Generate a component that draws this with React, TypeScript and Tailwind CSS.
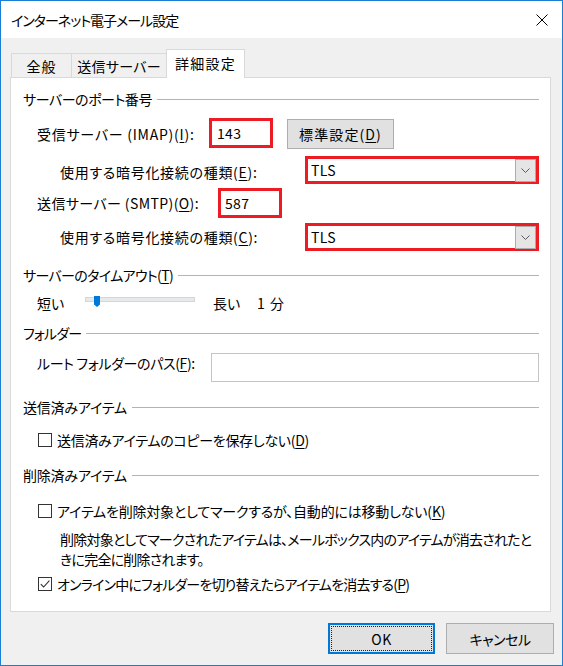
import React from "react";

function U({ children }: { children: React.ReactNode }) {
  return <span className="underline underline-offset-[2px] decoration-[1px]">{children}</span>;
}

function Header({ children, className = "", textClass = "" }: { children: React.ReactNode; className?: string; textClass?: string }) {
  return (
    <div className={"flex items-center h-[20px] " + className}>
      <span className={"whitespace-nowrap " + textClass}>{children}</span>
      <div className="ml-[5px] flex-1 h-px bg-[#b4b4b4]" />
    </div>
  );
}

function Check({ checked = false }: { checked?: boolean }) {
  return (
    <div className="w-[14px] h-[14px] border border-[#333333] bg-white flex items-center justify-center shrink-0">
      {checked && (
        <svg width="12" height="12" viewBox="0 0 12 12">
          <path d="M1.8 6.2 L4.6 9 L10.4 2.6" stroke="#333333" strokeWidth="1.1" fill="none" />
        </svg>
      )}
    </div>
  );
}

function Combo() {
  return (
    <div className="w-[234px] h-[28px] border-[3px] border-[#ed1c24] bg-white flex items-center justify-between shrink-0">
      <span className="pl-[3px] tracking-[0.3px]">TLS</span>
      <div className="w-[21px] h-[23px] border border-[#acacac] bg-[#e5e5e5] flex items-center justify-center">
        <svg width="9" height="5" viewBox="0 0 9 5">
          <path d="M0.5 0.5 L4.5 4.5 L8.5 0.5" stroke="#5a5a5a" strokeWidth="1" fill="none" />
        </svg>
      </div>
    </div>
  );
}

export default function App() {
  return (
    <div className="w-[563px] h-[666px] border border-[#1a7ed6] bg-[#f0f0f0] flex flex-col text-[14px] text-black font-['Noto_Sans_CJK_JP',sans-serif] [font-feature-settings:'palt'] leading-[20px] overflow-hidden">
      {/* title bar */}
      <div className="h-[37px] bg-white flex items-center justify-between pl-[10px] pr-[14px] shrink-0">
        <span className="tracking-[-1px]">インターネット電子メール設定</span>
        <svg width="12" height="12" viewBox="0 0 12 12">
          <path d="M0.5 0.5 L11.5 11.5 M11.5 0.5 L0.5 11.5" stroke="#000" strokeWidth="1" fill="none" />
        </svg>
      </div>

      {/* body */}
      <div className="flex-1 flex flex-col pt-[11px]">
        {/* tabs */}
        <div className="flex items-end h-[28px] ml-[10px]">
          <div className="w-[60px] h-[24px] border-l border-t border-[#d9d9d9] flex items-center justify-center tracking-[1px]">全般</div>
          <div className="w-[95px] h-[24px] border-l border-t border-[#d9d9d9] flex items-center justify-center tracking-[0.3px]">送信サーバー</div>
          <div className="relative z-10 -mb-px w-[79px] h-[29px] border-l border-t border-r border-[#d9d9d9] bg-white flex items-center justify-center pb-[2px] tracking-[1.2px]">
            詳細設定
          </div>
        </div>

        {/* panel */}
        <div className="ml-[9px] w-[541px] h-[535px] border border-[#d9d9d9] bg-white pl-[12px] pr-[11px] flex flex-col">
          <Header className="mt-[11px]" textClass="tracking-[-0.45px]">サーバーのポート番号</Header>

          <div className="flex items-start mt-[9px] h-[32px]">
            <div className="ml-[14px] w-[172px] h-[32px] flex items-center whitespace-nowrap tracking-[0.75px]">
              受信サーバー (IMAP)(<U>I</U>):
            </div>
            <div className="w-[64px] h-[30px] border-[3px] border-[#ed1c24] bg-white flex items-center pl-[5px] shrink-0 tracking-[0.3px]">143</div>
            <button className="ml-[14px] mt-px w-[107px] h-[30px] border border-[#adadad] bg-[#e1e1e1] flex items-center justify-center shrink-0 tracking-[1.1px]">
              標準設定(<U>D</U>)
            </button>
          </div>

          <div className="flex items-center mt-[6px] h-[28px]">
            <div className="ml-[37px] w-[246px] pt-[3px] whitespace-nowrap tracking-[0.7px]">
              使用する暗号化接続の種類(<U>E</U>):
            </div>
            <Combo />
          </div>

          <div className="flex items-center mt-[4px] h-[30px]">
            <div className="ml-[14px] w-[181px] whitespace-nowrap tracking-[0.4px]">
              送信サーバー (SMTP)(<U>O</U>):
            </div>
            <div className="w-[64px] h-[30px] border-[3px] border-[#ed1c24] bg-white flex items-center pl-[4px] shrink-0 tracking-[0.3px]">587</div>
          </div>

          <div className="flex items-center mt-[5px] h-[28px]">
            <div className="ml-[37px] w-[246px] whitespace-nowrap tracking-[0.7px]">
              使用する暗号化接続の種類(<U>C</U>):
            </div>
            <Combo />
          </div>

          <Header className="mt-[14px]" textClass="tracking-[-0.65px]">
            サーバーのタイムアウト(<U>T</U>)
          </Header>

          <div className="flex items-start mt-[8px] h-[20px]">
            <div className="ml-[14px] w-[48px]">短い</div>
            <div className="relative mt-[4px] w-[110px] h-[5px] bg-[#e7eaea] border border-[#d6d6d6] shrink-0">
              <svg className="absolute left-[8px] top-[-2px]" width="6" height="11" viewBox="0 0 6 11">
                <path d="M0 0 H6 V8.5 L3 11 L0 8.5 Z" fill="#0078d7" />
              </svg>
            </div>
            <div className="ml-[18px] w-[44px]">長い</div>
            <div className="whitespace-nowrap tracking-[1px]">1 分</div>
          </div>

          <Header className="mt-[10px]" textClass="tracking-[-0.8px]">フォルダー</Header>

          <div className="flex items-start mt-[10px] h-[28px]">
            <div className="ml-[14px] w-[175px] whitespace-nowrap tracking-[-0.35px]">
              ルート フォルダーのパス(<U>F</U>):
            </div>
            <div className="w-[328px] h-[29px] border border-[#c4c4c4] bg-white shrink-0" />
          </div>

          <Header className="mt-[16px]" textClass="tracking-[-0.2px]">送信済みアイテム</Header>

          <div className="flex items-center mt-[13px] h-[20px] ml-[15px]">
            <Check />
            <span className="ml-[5px] whitespace-nowrap tracking-[-0.28px]">
              送信済みアイテムのコピーを保存しない(<U>D</U>)
            </span>
          </div>

          <Header className="mt-[15px]" textClass="tracking-[-0.2px]">削除済みアイテム</Header>

          <div className="flex items-center mt-[16px] h-[20px] ml-[15px]">
            <Check />
            <span className="ml-[5px] whitespace-nowrap tracking-[-0.2px]">
              アイテムを削除対象としてマークするが、自動的には移動しない(<U>K</U>)
            </span>
          </div>

          <div className="mt-[8px] ml-[37px] whitespace-nowrap tracking-[-0.78px]">
            削除対象としてマークされたアイテムは、メールボックス内のアイテムが消去されたと
            <br />
            きに完全に削除されます。
          </div>

          <div className="flex items-center mt-[5px] h-[20px] ml-[15px]">
            <Check checked />
            <span className="ml-[5px] whitespace-nowrap tracking-[-0.8px]">
              オンライン中にフォルダーを切り替えたらアイテムを消去する(<U>P</U>)
            </span>
          </div>
        </div>

        {/* buttons */}
        <div className="flex justify-end mt-[11px] pr-[8px] gap-[11px]">
          <button className="w-[107px] h-[31px] border-2 border-[#0078d7] bg-[#e1e1e1] p-[1px] flex">
            <div className="flex-1 border border-dotted border-[#222] flex items-center justify-center tracking-[0.5px]">OK</div>
          </button>
          <button className="w-[108px] h-[31px] border border-[#adadad] bg-[#e1e1e1] flex items-center justify-center tracking-[-0.5px]">
            キャンセル
          </button>
        </div>
      </div>
    </div>
  );
}
